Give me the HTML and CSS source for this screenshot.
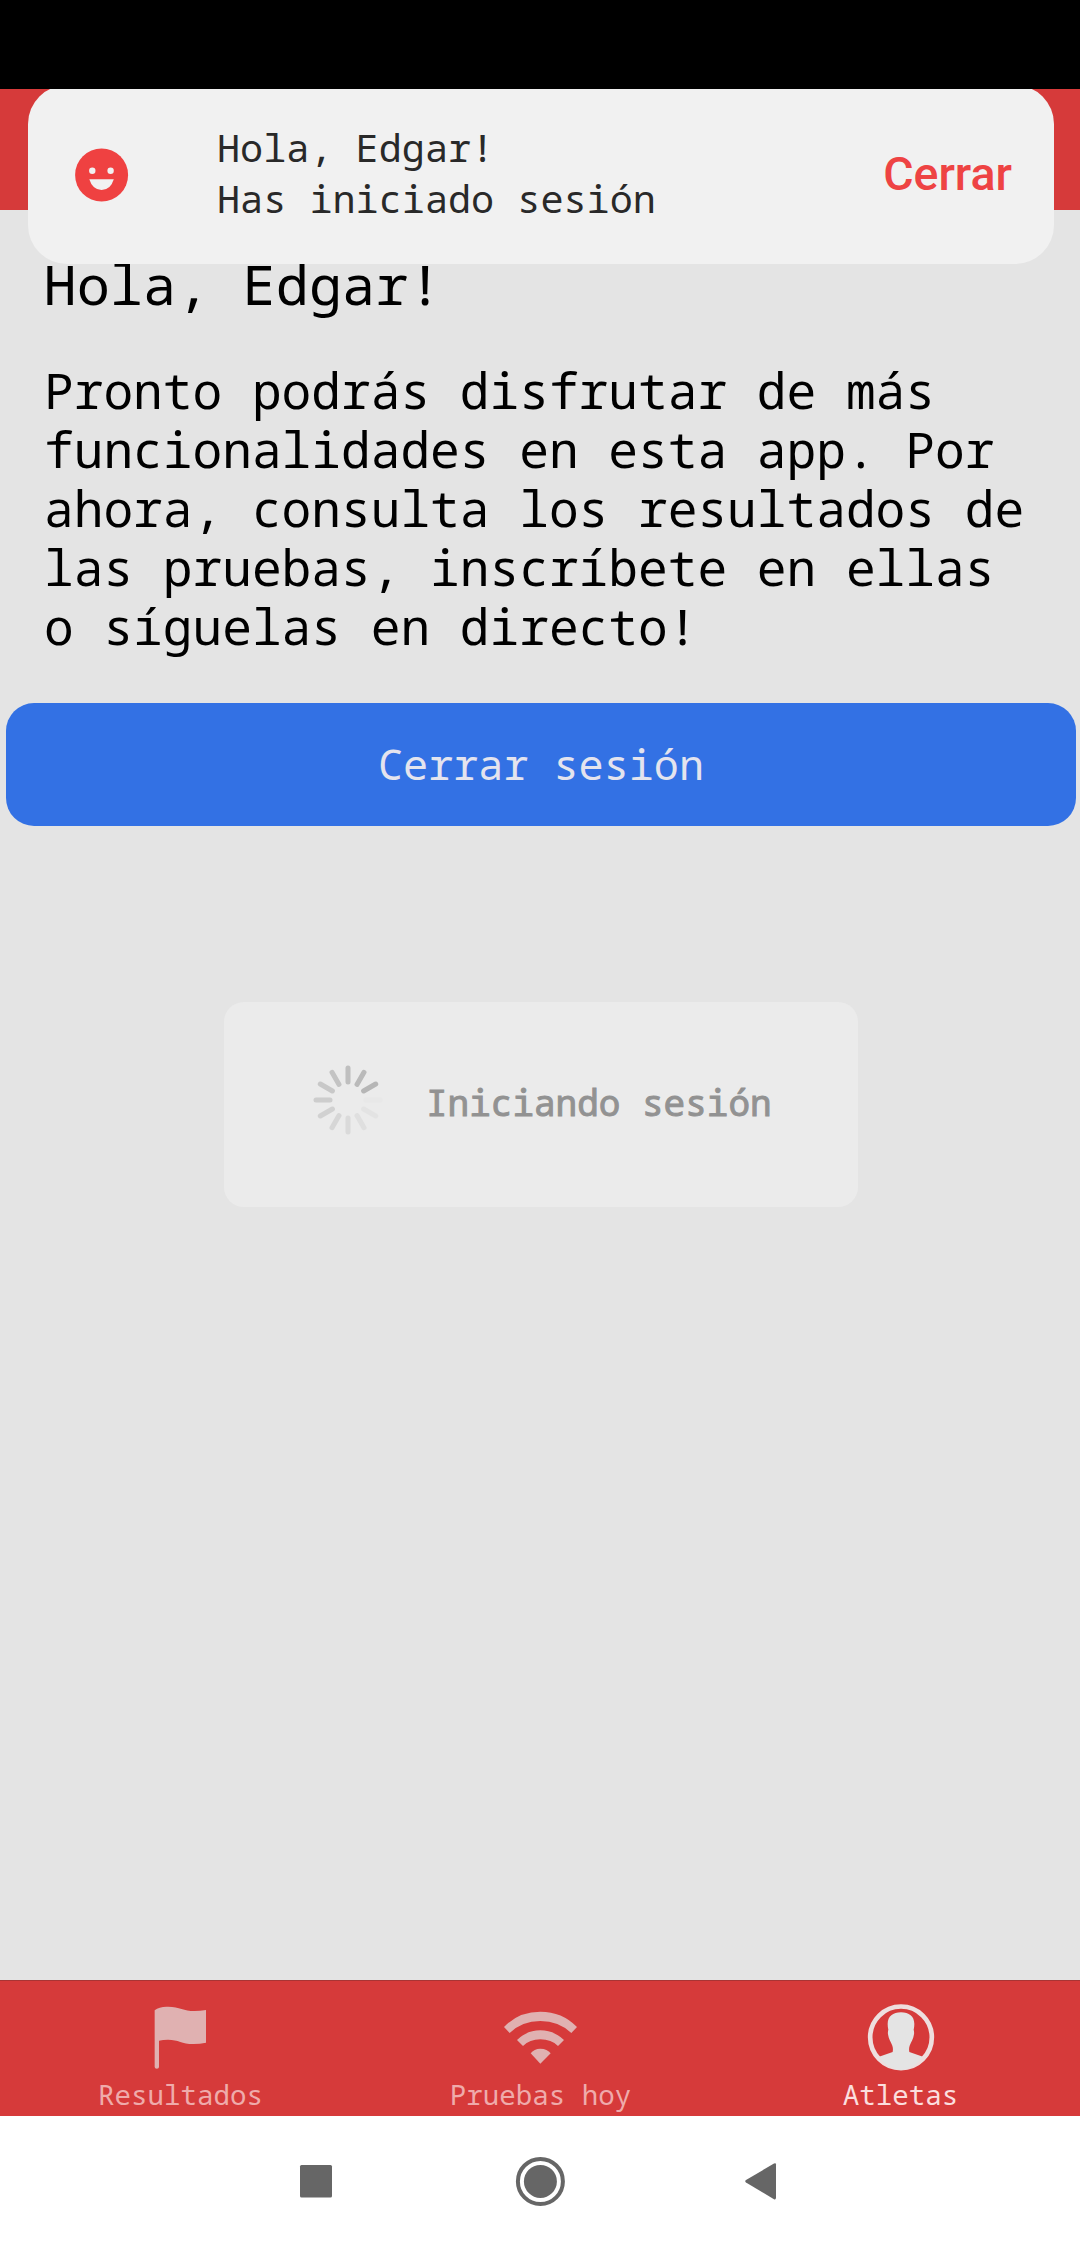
FILE: index.html
```html
<!DOCTYPE html>
<html lang="es">
<head>
<meta charset="utf-8">
<title>Atletas</title>
<link rel="stylesheet" href="styles.css">
</head>
<body>
<div class="screen">
  <div class="status-bar"></div>
  <header class="app-bar"></header>
  <main class="content">
    <h1 class="greeting">Hola, Edgar!</h1>
    <p class="message">Pronto podrás disfrutar de más<br>funcionalidades en esta app. Por<br>ahora, consulta los resultados de<br>las pruebas, inscríbete en ellas<br>o síguelas en directo!</p>
    <button class="logout">Cerrar sesión</button>
  </main>
  <nav class="tabs">
    <a class="tab">
      <svg class="tab-icon" viewBox="0 0 240 240"><path d="M44 204V34Q58 22 84 23C120 24 130 36 164 36Q180 36 198 33V131Q180 135 160 135C125 135 116 122 84 122Q68 122 57 125V204Q57 209 50.500 209Q44 209 44 204Z"/></svg>
      <span>Resultados</span>
    </a>
    <a class="tab">
      <svg class="tab-icon" viewBox="0 0 240 240"><path d="M12 84Q55 38 121 38Q187 38 231 84L214 102Q176 66 121 66Q66 66 29 102Z"/><path d="M51 123Q80 94 121 94Q162 94 192 123L174 141Q154 121 121 121Q89 121 69 141Z"/><path d="M92 163Q102 149 121 149Q142 149 152 163L121 194Z"/></svg>
      <span>Pruebas hoy</span>
    </a>
    <a class="tab active">
      <svg class="tab-icon" viewBox="0 0 240 240"><circle class="ring" cx="123" cy="115" r="92.500"/><path d="M57 173L98 159Q100 148 97 140C92 128 86 120 84 106Q83 98 85 92Q83 84 83 75C83 52 99 40 123 40C147 40 163 52 163 75Q163 84 161 92Q163 98 162 106C160 120 154 128 149 140Q146 148 148 159L189 173Q165 210 123 213Q81 210 57 173Z"/></svg>
      <span>Atletas</span>
    </a>
  </nav>
  <div class="system-nav">
    <svg class="nav-icon" viewBox="0 0 60 60"><rect x="14" y="14" width="32" height="32.500" rx="1.500"/></svg>
    <svg class="nav-icon" viewBox="0 0 60 60"><circle class="nav-ring" cx="30.400" cy="30.400" r="22.500"/><circle cx="30.400" cy="30.400" r="16.500"/></svg>
    <svg class="nav-icon" viewBox="0 0 60 60"><path d="M12 29Q10.500 30.200 12 31.500L40 48.200Q42 49 42 46.500V13.500Q42 11.500 40 12.500Z"/></svg>
  </div>

  <div class="toast">
    <svg class="face" viewBox="0 0 54 54"><circle cx="26.600" cy="27" r="26.500"/><g class="face-cut"><circle cx="17.300" cy="22.700" r="3.200"/><circle cx="35.600" cy="22.700" r="3.200"/><path d="M14.300 31.300H38.800Q35.600 42 26.600 42Q17.600 42 14.300 31.300Z"/></g></svg>
    <p class="toast-text">Hola, Edgar!<br>Has iniciado sesión</p>
    <span class="toast-close">Cerrar</span>
  </div>

  <div class="loader">
    <svg class="spinner" viewBox="-36 -36 72 72">
      <path opacity="1" d="M15.600 -9L27.700 -16"/>
      <path opacity=".92" d="M9 -15.600L16 -27.700"/>
      <path opacity=".82" d="M0 -18V-32"/>
      <path opacity=".74" d="M-9 -15.600L-16 -27.700"/>
      <path opacity=".65" d="M-15.600 -9L-27.700 -16"/>
      <path opacity=".56" d="M-18 0H-32"/>
      <path opacity=".47" d="M-15.600 9L-27.700 16"/>
      <path opacity=".38" d="M-9 15.600L-16 27.700"/>
      <path opacity=".3" d="M0 18V32"/>
      <path opacity=".22" d="M9 15.600L16 27.700"/>
      <path opacity=".13" d="M15.600 9L27.700 16"/>
      <path opacity=".05" d="M18 0H32"/>
    </svg>
    <span>Iniciando sesión</span>
  </div>
</div>
</body>
</html>
```
FILE: styles.css
```css
* { box-sizing: border-box; }
body { margin: 0; }
h1, p { margin: 0; font-weight: 400; }

.screen {
  position: relative;
  width: 1080px;
  height: 2246px;
  overflow: hidden;
  display: flex;
  flex-direction: column;
  background: #e4e4e4;
  font-family: "Noto Sans Mono", "Droid Sans Mono", "DejaVu Sans Mono", monospace;
}

.status-bar { position: relative; z-index: 2; height: 89px; background: #000; }
.app-bar { height: 121px; background: #d63a3a; }

.content {
  flex: 1;
  display: flex;
  flex-direction: column;
  padding: 41px 4px 0 6px;
  color: #000;
}
.greeting { padding-left: 37.500px; font-size: 55.300px; line-height: 65px; }
.message { margin-top: 45px; padding-left: 38px; font-size: 49.500px; line-height: 59px; white-space: nowrap; }
.logout {
  margin-top: 47px;
  height: 123px;
  padding: 0 0 3px;
  border: 0;
  border-radius: 28px;
  background: #3371e4;
  color: #e4e4ee;
  font-family: inherit;
  font-size: 41.800px;
}

.tabs {
  height: 136px;
  display: grid;
  grid-template-columns: repeat(3, 1fr);
  background: #d63a3a;
  border-top: 1px solid #a93434;
}
.tab {
  display: flex;
  flex-direction: column;
  align-items: center;
  padding-top: 18px;
  color: #efabab;
  fill: #e0b1b1;
  font-size: 27.500px;
  line-height: 32px;
}
.tab span { padding-left: 1px; }
.tab.active { color: #fbdede; fill: #e4e4e4; }
.tab-icon { width: 80px; height: 80px; }
.ring { fill: none; stroke: #eedede; stroke-width: 14; }

.system-nav {
  height: 130px;
  display: flex;
  justify-content: center;
  gap: 164px;
  padding-top: 35px;
  background: #fff;
  fill: #666;
}
.nav-icon { width: 60px; height: 60px; }
.nav-ring { fill: none; stroke: #666; stroke-width: 4; }

.toast {
  position: absolute;
  z-index: 1;
  left: 28px;
  top: 85px;
  width: 1026px;
  height: 179px;
  display: flex;
  align-items: center;
  padding: 0 42px 0 47px;
  border-radius: 39px;
  background: #f1f1f1;
}
.face { width: 54px; height: 54px; fill: #ef4141; }
.face-cut { fill: #f1f1f1; }
.toast-text { margin-left: 88px; padding-bottom: 4px; font-size: 38.500px; line-height: 51px; color: #292929; }
.toast-close { margin-left: auto; padding-bottom: 1px; font: 500 46.500px/52px Roboto, sans-serif; color: #ee4343; }

.loader {
  position: absolute;
  left: 224px;
  top: 1002px;
  width: 634px;
  height: 205px;
  display: flex;
  align-items: center;
  padding: 0 0 4px 88px;
  gap: 42px;
  border-radius: 20px;
  background: #ebebeb;
  color: #929292;
  font-size: 36px;
  -webkit-text-stroke: 1px #929292;
}
.spinner { width: 72px; height: 72px; margin-top: -6px; stroke: #b6b6b6; stroke-width: 5; stroke-linecap: round; }
```
